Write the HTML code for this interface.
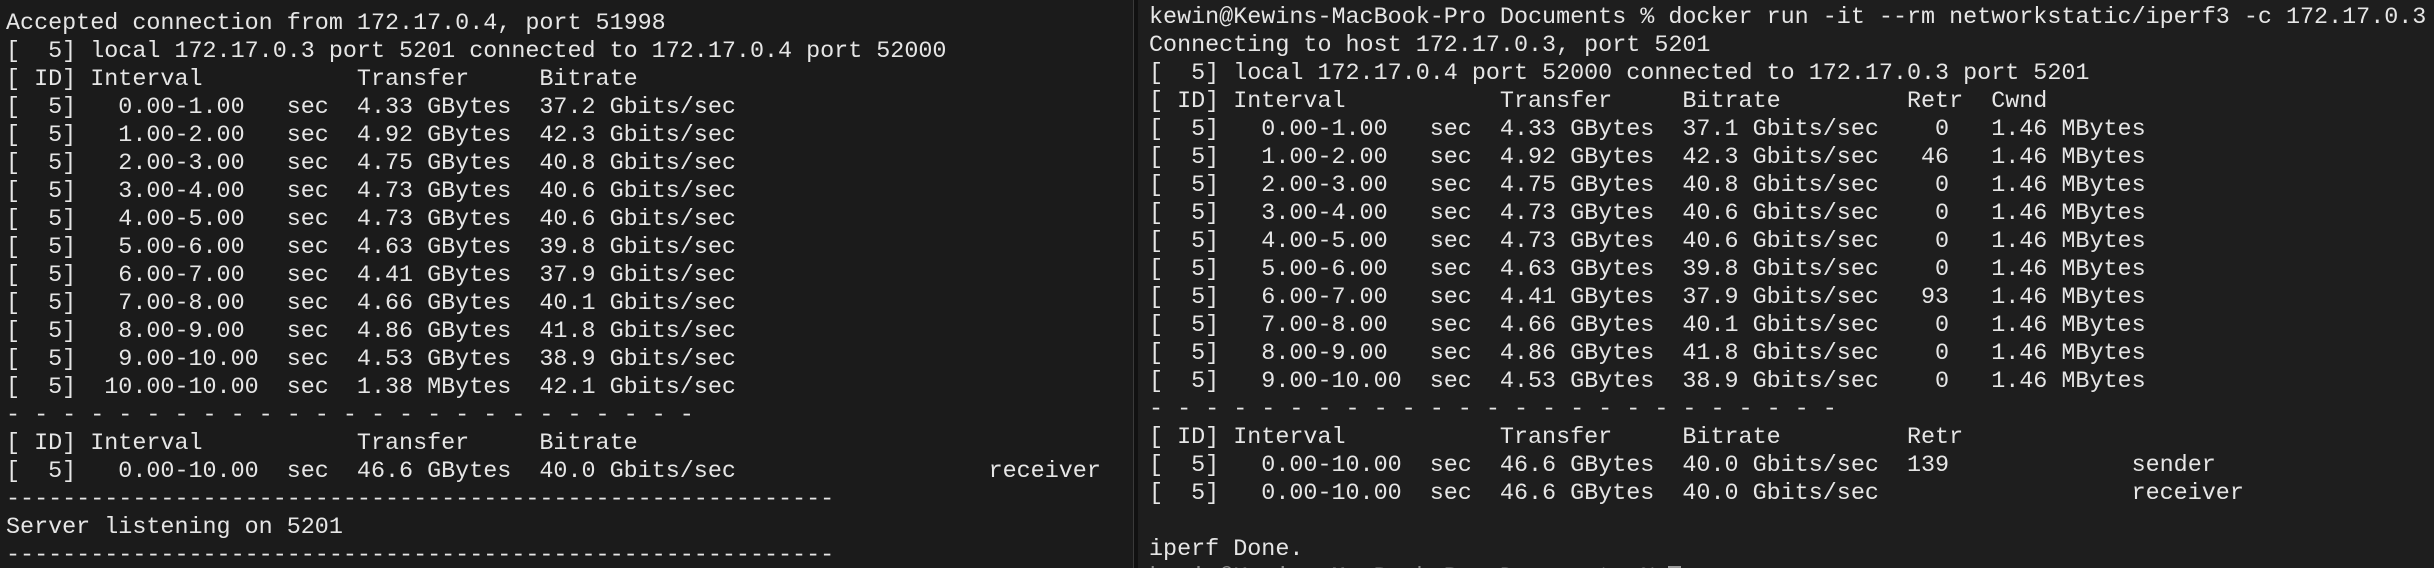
<!DOCTYPE html>
<html><head><meta charset="utf-8"><style>
html,body{margin:0;padding:0;width:2434px;height:568px;overflow:hidden;background:#1c1c1c}
.p{position:absolute;top:0;height:568px;overflow:hidden}
#l{left:0;width:1133px;background:#1b1b1b}
#d{left:1133px;width:5px;background:#111;border-left:1px solid #3a3a3a;box-sizing:border-box}
#r{left:1138px;width:1296px;background:#1e1e1e}
pre{margin:0;position:absolute;font-family:"Liberation Mono",monospace;font-size:23.4px;line-height:28px;color:#e6e6e6;white-space:pre}
#l pre{left:6px;top:10px}
#r pre{left:11px;top:4px}
.dim{color:#8a8a8a}
.cur{display:inline-block;width:13px;height:24px;background:#9a9a9a;vertical-align:top;margin-top:2px}
</style></head><body>
<div class="p" id="l"><pre>Accepted connection from 172.17.0.4, port 51998
[  5] local 172.17.0.3 port 5201 connected to 172.17.0.4 port 52000
[ ID] Interval           Transfer     Bitrate
[  5]   0.00-1.00   sec  4.33 GBytes  37.2 Gbits/sec
[  5]   1.00-2.00   sec  4.92 GBytes  42.3 Gbits/sec
[  5]   2.00-3.00   sec  4.75 GBytes  40.8 Gbits/sec
[  5]   3.00-4.00   sec  4.73 GBytes  40.6 Gbits/sec
[  5]   4.00-5.00   sec  4.73 GBytes  40.6 Gbits/sec
[  5]   5.00-6.00   sec  4.63 GBytes  39.8 Gbits/sec
[  5]   6.00-7.00   sec  4.41 GBytes  37.9 Gbits/sec
[  5]   7.00-8.00   sec  4.66 GBytes  40.1 Gbits/sec
[  5]   8.00-9.00   sec  4.86 GBytes  41.8 Gbits/sec
[  5]   9.00-10.00  sec  4.53 GBytes  38.9 Gbits/sec
[  5]  10.00-10.00  sec  1.38 MBytes  42.1 Gbits/sec
- - - - - - - - - - - - - - - - - - - - - - - - -
[ ID] Interval           Transfer     Bitrate
[  5]   0.00-10.00  sec  46.6 GBytes  40.0 Gbits/sec                  receiver
-----------------------------------------------------------
Server listening on 5201
-----------------------------------------------------------</pre></div>
<div class="p" id="d"></div>
<div class="p" id="r"><pre>kewin@Kewins-MacBook-Pro Documents % docker run -it --rm networkstatic/iperf3 -c 172.17.0.3
Connecting to host 172.17.0.3, port 5201
[  5] local 172.17.0.4 port 52000 connected to 172.17.0.3 port 5201
[ ID] Interval           Transfer     Bitrate         Retr  Cwnd
[  5]   0.00-1.00   sec  4.33 GBytes  37.1 Gbits/sec    0   1.46 MBytes
[  5]   1.00-2.00   sec  4.92 GBytes  42.3 Gbits/sec   46   1.46 MBytes
[  5]   2.00-3.00   sec  4.75 GBytes  40.8 Gbits/sec    0   1.46 MBytes
[  5]   3.00-4.00   sec  4.73 GBytes  40.6 Gbits/sec    0   1.46 MBytes
[  5]   4.00-5.00   sec  4.73 GBytes  40.6 Gbits/sec    0   1.46 MBytes
[  5]   5.00-6.00   sec  4.63 GBytes  39.8 Gbits/sec    0   1.46 MBytes
[  5]   6.00-7.00   sec  4.41 GBytes  37.9 Gbits/sec   93   1.46 MBytes
[  5]   7.00-8.00   sec  4.66 GBytes  40.1 Gbits/sec    0   1.46 MBytes
[  5]   8.00-9.00   sec  4.86 GBytes  41.8 Gbits/sec    0   1.46 MBytes
[  5]   9.00-10.00  sec  4.53 GBytes  38.9 Gbits/sec    0   1.46 MBytes
- - - - - - - - - - - - - - - - - - - - - - - - -
[ ID] Interval           Transfer     Bitrate         Retr
[  5]   0.00-10.00  sec  46.6 GBytes  40.0 Gbits/sec  139             sender
[  5]   0.00-10.00  sec  46.6 GBytes  40.0 Gbits/sec                  receiver

iperf Done.
<span class="dim">kewin@Kewins-MacBook-Pro Documents % </span><span class="cur"></span></pre></div>
</body></html>
